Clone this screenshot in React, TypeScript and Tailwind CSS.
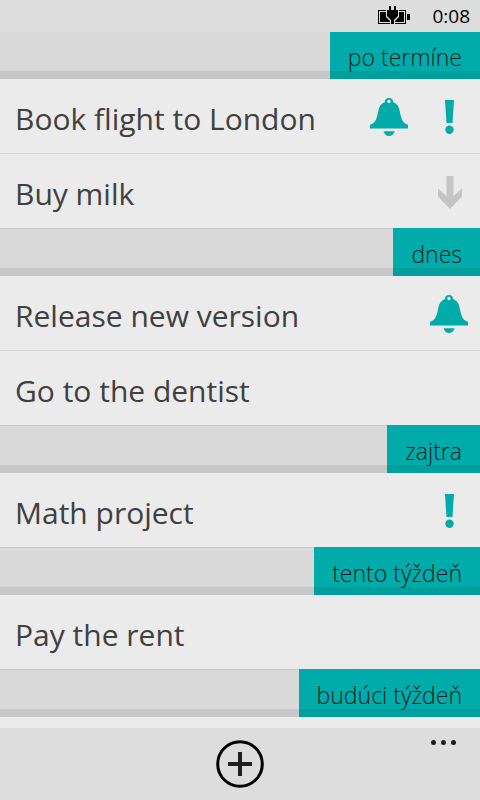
type Mark = "bell" | "high" | "low";

interface Task {
  title: string;
  marks: Mark[];
}

interface Group {
  label: string;
  tasks: Task[];
}

const groups: Group[] = [
  {
    label: "po termíne",
    tasks: [
      { title: "Book flight to London", marks: ["bell", "high"] },
      { title: "Buy milk", marks: ["low"] },
    ],
  },
  {
    label: "dnes",
    tasks: [
      { title: "Release new version", marks: ["bell"] },
      { title: "Go to the dentist", marks: [] },
    ],
  },
  { label: "zajtra", tasks: [{ title: "Math project", marks: ["high"] }] },
  { label: "tento týždeň", tasks: [{ title: "Pay the rent", marks: [] }] },
  { label: "budúci týždeň", tasks: [] },
];

function BatteryIcon() {
  return (
    <svg width="32" height="18" viewBox="0 0 32 18" aria-label="Charging" role="img">
      <path d="M0 4h28v14H0z" fill="#000" />
      <path d="M1 5h26v12H1z" fill="#ddd" />
      <path d="M2 6h24v10H2z" fill="#000" />
      <path d="M29 8h3v6h-3z" fill="#000" />
      <path d="M8 3h13v8l-4 4v3h-5v-3l-4-4z" fill="#ddd" />
      <path d="M11 0h2v4h3V0h2v4h2v6l-4 4v4h-3v-4l-4-4V4h2z" fill="#000" />
    </svg>
  );
}

function BellIcon() {
  return (
    <svg width="38" height="38" viewBox="0 0 38 38" fill="#00abaa" aria-label="Reminder" role="img">
      <path
        fillRule="evenodd"
        d="M19 0c2.400 0 4.200 1.600 4.200 4C27 5.500 29 9 29.700 13c1.300 7 2.800 12 6.800 13.200l1.500.6V30.500H0V26.800l1.500-.6C5.500 25 7 20 8.300 13 9 9 11 5.500 14.800 4 14.800 1.600 16.600 0 19 0zM19 1.800a1.700 1.700 0 1 0 0 3.400A1.700 1.700 0 0 0 19 1.800z"
      />
      <path d="M13.600 33.300h11c-.8 2.900-2.800 4.700-5.500 4.700s-4.700-1.800-5.500-4.700z" />
    </svg>
  );
}

function HighIcon() {
  return (
    <svg width="38" height="38" viewBox="0 0 38 38" fill="#00abaa" aria-label="High priority" role="img">
      <path d="M15 2h9l-1.500 23h-6z" />
      <circle cx="19.500" cy="31.700" r="4.200" />
    </svg>
  );
}

function LowIcon() {
  return (
    <svg width="38" height="38" viewBox="0 0 38 38" fill="#c4c4c4" aria-label="Low priority" role="img">
      <path d="M16.500 3h7v20l8.500-7.500v8L20 36 8 23.500v-8l8.500 7.500z" />
    </svg>
  );
}

function MarkIcon({ mark }: { mark: Mark }) {
  if (mark === "bell") return <BellIcon />;
  if (mark === "high") return <HighIcon />;
  return <LowIcon />;
}

function GroupHeader({ label }: { label: string }) {
  return (
    <div className="flex h-12 justify-end bg-linear-to-b from-[#c7c7c7] from-[1px] via-[#d9d9d9] via-[1px] to-[#d9d9d9]">
      <div className="grow border-b-8 border-[#c7c7c7]" />
      <h2 className="border-b-8 border-[#009f9c] bg-[#00abaa] px-[18px] pt-2 text-[23px] font-light leading-9 text-[#0b1c1c]">
        {label}
      </h2>
    </div>
  );
}

export default function App() {
  return (
    <div className="flex h-screen flex-col overflow-hidden bg-[#ebebeb] font-['Open_Sans','Noto_Sans',sans-serif]">
      <header className="z-10 flex h-8 shrink-0 items-center justify-end gap-[22px] bg-[#ddd] pr-[10px] text-black">
        <div className="pb-[2px]">
          <BatteryIcon />
        </div>
        <time className="text-[19px] leading-8">0:08</time>
      </header>

      <main className="-mt-px min-h-0 grow overflow-hidden">
        {groups.map((group) => (
          <section key={group.label}>
            <GroupHeader label={group.label} />
            <ul className="divide-y divide-[#d6d6d6]">
              {group.tasks.map((task) => (
                <li key={task.title} className="flex h-[74px] items-center pt-[2px] pr-3 pl-[15px] not-last:h-[75px]">
                  <span className="grow pt-1 text-[30px] leading-10 text-[#404040]">{task.title}</span>
                  <span className="flex gap-[22px]">
                    {task.marks.map((mark) => (
                      <MarkIcon key={mark} mark={mark} />
                    ))}
                  </span>
                </li>
              ))}
            </ul>
          </section>
        ))}
      </main>

      <footer className="relative flex h-[72px] shrink-0 items-center justify-center bg-[#ddd]">
        <button type="button" aria-label="Add task">
          <svg width="48" height="48" viewBox="0 0 48 48">
            <circle cx="24" cy="24" r="22.300" fill="none" stroke="#000" strokeWidth="3" />
            <path d="M12 22h10V12h4v10h10v4H26v10h-4V26H12z" fill="#1f1f1f" />
          </svg>
        </button>
        <button type="button" aria-label="More" className="absolute top-3 right-6">
          <svg width="25" height="5" viewBox="0 0 25 5" fill="#1f1f1f">
            <circle cx="2.500" cy="2.500" r="2.500" />
            <circle cx="12.500" cy="2.500" r="2.500" />
            <circle cx="22.500" cy="2.500" r="2.500" />
          </svg>
        </button>
      </footer>
    </div>
  );
}
